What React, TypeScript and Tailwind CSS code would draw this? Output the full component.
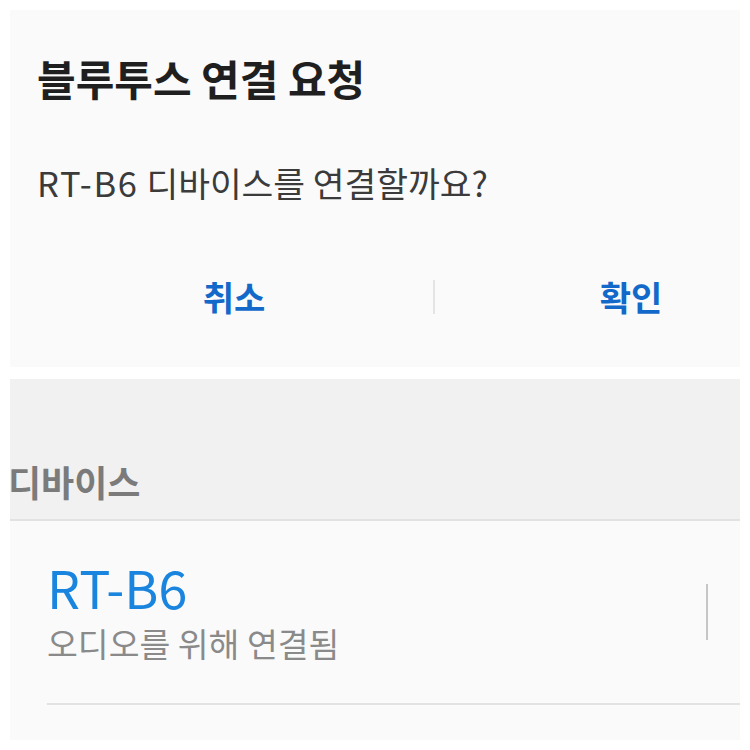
const font = "font-['Noto_Sans_CJK_KR','Noto_Sans',sans-serif]";

function ConnectDialog() {
  return (
    <div className="mx-[10px] mt-[10px] h-[357px] w-[730px] bg-[#fafafa]">
      <h1 className="pl-[27px] pt-[42px] text-[42px] font-bold leading-[52px] text-[#1f1f1f]">
        블루투스 연결 요청
      </h1>
      <p className="mt-[56px] pl-[27px] text-[34.5px] leading-[44px] text-[#3b3b3b]">
        <span className="tracking-[0.05em]">RT-B6</span> 디바이스를 연결할까요?
      </p>
      <div className="mt-[71px] flex items-center">
        <button
          type="button"
          className="flex w-[423px] justify-center pl-[25px] text-[34px] font-bold leading-[44px] text-[#1269c9]"
        >
          취소
        </button>
        <div className="h-[34px] w-[2px] bg-[#e4e4e4]" />
        <button
          type="button"
          className="flex flex-1 justify-center pl-[87px] text-[34px] font-bold leading-[44px] text-[#1269c9]"
        >
          확인
        </button>
      </div>
    </div>
  );
}

function DeviceList() {
  return (
    <div className="mx-[10px] mt-[12px] h-[361px] w-[730px] bg-[#fafafa]">
      <div className="flex h-[142px] items-end border-b-2 border-[#e2e2e2] bg-[#f1f1f1] pb-[16px]">
        <span className="-ml-[2px] text-[36px] font-semibold leading-[44px] text-[#7b7b7b]">
          디바이스
        </span>
      </div>
      <div className="pl-[37px]">
        <div className="flex items-center border-b-2 border-[#e3e3e3] pt-[40px] pb-[40px]">
          <div className="flex-1">
            <div className="text-[52px] leading-[52px] text-[#1a85de]">RT-B6</div>
            <div className="mt-[10px] text-[33.5px] leading-[40px] text-[#8a8a8a]">
              오디오를 위해 연결됨
            </div>
          </div>
          <div className="mr-[32px] h-[56px] w-[2px] bg-[#c6c6c6]" />
        </div>
      </div>
    </div>
  );
}

export default function App() {
  return (
    <div className={`h-[750px] w-[750px] overflow-hidden bg-white ${font}`}>
      <ConnectDialog />
      <DeviceList />
    </div>
  );
}
